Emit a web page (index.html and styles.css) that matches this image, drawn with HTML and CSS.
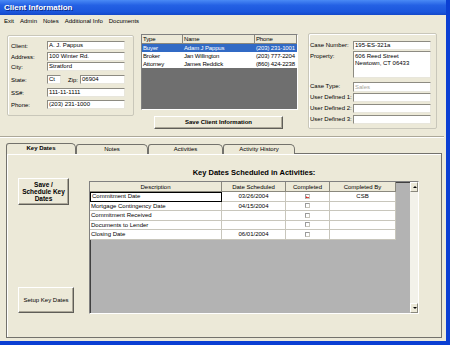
FILE: index.html
```html
<!DOCTYPE html>
<html lang="en">
<head>
    <meta charset="UTF-8">
    <title>Client Information</title>
    <link rel="stylesheet" href="styles.css">
</head>
<body>
    <div class="window">
        <div class="titlebar">Client Information</div>
        <div class="menubar">
            <span>Exit</span>
            <span>Admin</span>
            <span>Notes</span>
            <span>Additional Info</span>
            <span>Documents</span>
        </div>

        <div class="top">
            <div class="group client">
                <span class="label">Client:</span>
                <div class="field">A. J. Pappus</div>
                <span class="label">Address:</span>
                <div class="field">100 Winter Rd.</div>
                <span class="label">City:</span>
                <div class="field">Stratford</div>
                <span class="label">State:</span>
                <div class="state-row">
                    <div class="field state">Ct</div>
                    <span class="label zip-label">Zip:</span>
                    <div class="field zip">06904</div>
                </div>
                <span class="label">SS#:</span>
                <div class="field">111-11-1111</div>
                <span class="label">Phone:</span>
                <div class="field">(203) 231-1000</div>
            </div>

            <div class="contacts">
                <div class="list">
                    <div class="list-row list-head">
                        <span class="c-type">Type</span>
                        <span class="c-name">Name</span>
                        <span class="c-phone">Phone</span>
                    </div>
                    <div class="list-row selected">
                        <span class="c-type">Buyer</span>
                        <span class="c-name">Adam J Pappus</span>
                        <span class="c-phone">(203) 231-1001</span>
                    </div>
                    <div class="list-row">
                        <span class="c-type">Broker</span>
                        <span class="c-name">Jan Willington</span>
                        <span class="c-phone">(203) 777-2204</span>
                    </div>
                    <div class="list-row">
                        <span class="c-type">Attorney</span>
                        <span class="c-name">James Reddick</span>
                        <span class="c-phone">(860) 424-2238</span>
                    </div>
                </div>
                <button class="btn bold save-client">Save Client Information</button>
            </div>

            <div class="group case">
                <span class="label">Case Number:</span>
                <div class="field">195-ES-321a</div>
                <span class="label top-label">Property:</span>
                <div class="field area">606 Reed Street<br>Newtown, CT 06433</div>
                <span class="label">Case Type:</span>
                <div class="field disabled">Sales</div>
                <span class="label">User Defined 1:</span>
                <div class="field"></div>
                <span class="label">User Defined 2:</span>
                <div class="field"></div>
                <span class="label">User Defined 3:</span>
                <div class="field"></div>
            </div>
        </div>

        <div class="separator"></div>

        <div class="tabs">
            <div class="tab active">Key Dates</div>
            <div class="tab">Notes</div>
            <div class="tab">Activities</div>
            <div class="tab">Activity History</div>
        </div>

        <div class="panel">
            <div class="side">
                <button class="btn bold schedule">Save /<br>Schedule Key<br>Dates</button>
                <button class="btn setup">Setup Key Dates</button>
            </div>
            <div class="main">
                <h2>Key Dates Scheduled in Activities:</h2>
                <div class="grid">
                    <div class="grid-body">
                        <div class="g-row g-head">
                            <span class="g-desc">Description</span>
                            <span class="g-date">Date Scheduled</span>
                            <span class="g-done">Completed</span>
                            <span class="g-by">Completed By</span>
                        </div>
                        <div class="g-row">
                            <span class="g-desc current">Commitment Date</span>
                            <span class="g-date">03/26/2004</span>
                            <span class="g-done"><span class="check checked"></span></span>
                            <span class="g-by">CSB</span>
                        </div>
                        <div class="g-row">
                            <span class="g-desc">Mortgage Contingency Date</span>
                            <span class="g-date">04/15/2004</span>
                            <span class="g-done"><span class="check"></span></span>
                            <span class="g-by"></span>
                        </div>
                        <div class="g-row">
                            <span class="g-desc">Commitment Received</span>
                            <span class="g-date"></span>
                            <span class="g-done"><span class="check"></span></span>
                            <span class="g-by"></span>
                        </div>
                        <div class="g-row">
                            <span class="g-desc">Documents to Lender</span>
                            <span class="g-date"></span>
                            <span class="g-done"><span class="check"></span></span>
                            <span class="g-by"></span>
                        </div>
                        <div class="g-row">
                            <span class="g-desc">Closing Date</span>
                            <span class="g-date">06/01/2004</span>
                            <span class="g-done"><span class="check"></span></span>
                            <span class="g-by"></span>
                        </div>
                    </div>
                    <div class="scrollbar">
                        <span class="arrow up"></span>
                        <span class="arrow down"></span>
                    </div>
                </div>
            </div>
        </div>
    </div>
</body>
</html>
```

FILE: styles.css
```css
* {
    box-sizing: border-box;
}
body {
    margin: 0;
    font-family: "Liberation Sans", Arial, sans-serif;
    font-size: 6px;
    color: #000;
}
.window {
    width: 450px;
    height: 345px;
    background: #ece9d8;
    border-right: 4px solid #0b3fd3;
    border-bottom: 4px solid #0b3fd3;
    overflow: hidden;
}
.titlebar {
    height: 15px;
    padding-left: 4px;
    line-height: 15px;
    font-size: 8px;
    font-weight: bold;
    color: #fff;
    background: linear-gradient(#4a8af5, #2461e4 35%, #1b56dc 80%, #1448c8);
    text-shadow: 1px 1px 0 #0a2a8a;
}
.menubar {
    height: 12px;
    display: flex;
    gap: 6px;
    padding-left: 4px;
    line-height: 12px;
}

/* top section */
.top {
    height: 109px;
    display: flex;
    align-items: flex-start;
    padding-left: 7px;
}
.group {
    border: 1px solid #c9c7ba;
    border-radius: 2px;
    box-shadow: inset 1px 1px 0 #fff;
    display: grid;
    align-items: center;
}
.client {
    width: 127px;
    height: 81px;
    margin-top: 8px;
    padding: 5px 0 0 3px;
    grid-template-columns: 36px 78px;
    grid-template-rows: 11px 10px 13px 13px 12px 10px;
    align-items: start;
}
.client .label {
    line-height: 10px;
}
.field {
    height: 9px;
    background: #fff;
    border: 1px solid;
    border-color: #8d8b82 #e8e6dc #e8e6dc #8d8b82;
    padding-left: 1px;
    line-height: 7px;
    white-space: nowrap;
    overflow: hidden;
}
.state-row {
    display: flex;
}
.state {
    width: 14px;
}
.zip-label {
    margin-left: 7px;
    width: 12px;
    line-height: 10px;
}
.zip {
    width: 45px;
}

.contacts {
    width: 157px;
    margin: 7px 0 0 7px;
    display: flex;
    flex-direction: column;
}
.list {
    height: 76px;
    background: #6f6f6f;
    border: 1px solid;
    border-color: #808080 #fff #fff #808080;
}
.list-row {
    display: flex;
    height: 8px;
    line-height: 8px;
    background: #fff;
    letter-spacing: -0.15px;
}
.list-row span {
    padding-left: 1px;
    white-space: nowrap;
    overflow: hidden;
}
.list-head {
    height: 9px;
    line-height: 9px;
    background: #ece9d8;
}
.list-head span {
    border-right: 1px solid #8a887d;
    border-bottom: 1px solid #8a887d;
}
.list-row.selected {
    background: #316ac5;
    color: #fff;
}
.c-type {
    width: 41px;
}
.c-name {
    width: 72px;
}
.c-phone {
    flex: 1;
}

.btn {
    font-family: inherit;
    font-size: 6px;
    background: #ece9d8;
    border: 1px solid;
    border-color: #fff #5f5e58 #5f5e58 #fff;
    box-shadow: inset -1px -1px 0 #aca899;
    padding: 0;
    line-height: 7px;
    color: #000;
}
.bold {
    font-weight: bold;
}
.save-client {
    width: 129px;
    height: 13px;
    margin: 6px 0 0 13px;
}

.case {
    width: 129px;
    height: 96px;
    margin: 6px 0 0 10px;
    padding: 7px 0 0 1px;
    grid-template-columns: 43px 78px;
    grid-template-rows: 10px 31px 11px 11px 11px 9px;
    align-items: start;
}
.case .label {
    line-height: 9px;
}
.case .top-label {
    margin-top: 1px;
}
.area {
    height: 27px;
    white-space: normal;
    padding-top: 1px;
}
.disabled {
    height: 10px;
    color: #a8a69c;
    line-height: 8px;
}

.separator {
    height: 2px;
    margin-right: 2px;
    border-top: 1px solid #aca899;
    border-bottom: 1px solid #fff;
}

/* tabs */
.tabs {
    display: flex;
    height: 9px;
    margin-top: 6px;
    padding-left: 6px;
    align-items: flex-end;
}
.tab {
    height: 10px;
    margin-bottom: -1px;
    border: 1px solid #73726c;
    border-bottom: none;
    border-radius: 3px 5px 0 0;
    background: #ece9d8;
    text-align: center;
    line-height: 9px;
    position: relative;
}
.tab:nth-child(1) { width: 70px; }
.tab:nth-child(2) { width: 72px; }
.tab:nth-child(3) { width: 75px; }
.tab:nth-child(4) { width: 72px; }
.tab.active {
    height: 11px;
    font-weight: bold;
    z-index: 1;
}

.panel {
    display: flex;
    width: 436px;
    height: 185px;
    margin-left: 6px;
    border: 1px solid #73726c;
    box-shadow: inset 1px 1px 0 #fff;
}
.side {
    width: 82px;
    padding-left: 11px;
    display: flex;
    flex-direction: column;
    align-items: flex-start;
}
.schedule {
    width: 51px;
    height: 27px;
    margin-top: 24px;
    font-size: 6.5px;
}
.setup {
    width: 56px;
    height: 26px;
    margin-top: 82px;
}
.main {
    width: 330px;
}
.main h2 {
    margin: 14px 0 0;
    height: 9px;
    font-size: 7.5px;
    line-height: 9px;
    text-align: center;
}
.grid {
    display: flex;
    height: 133px;
    margin-top: 4px;
    background: #b3b3b3;
    border: 1px solid;
    border-color: #808080 #fff #fff #808080;
    box-shadow: inset 1px 1px 0 #404040;
}
.grid-body {
    flex: 1;
}
.g-row {
    display: flex;
    height: 9.5px;
    line-height: 9px;
}
.g-row span {
    background: #fff;
    border-right: 1px solid #c8c6bc;
    border-bottom: 1px solid #c8c6bc;
    white-space: nowrap;
    overflow: hidden;
}
.g-head {
    height: 10px;
    line-height: 10px;
}
.g-head span {
    background: #ece9d8;
    border-right-color: #8a887d;
    border-bottom-color: #8a887d;
    text-align: center;
}
.g-desc {
    width: 132px;
    padding-left: 1px;
}
.g-head .g-desc {
    padding-left: 0;
}
.g-desc.current {
    border: 1px solid #000;
    line-height: 7px;
}
.g-date {
    width: 64px;
    text-align: center;
}
.g-done {
    width: 44px;
    display: flex;
    justify-content: center;
    align-items: center;
}
.g-by {
    width: 66px;
    text-align: center;
}
.check {
    width: 5px;
    height: 5px;
    background: #c4c4c4;
    border: 1px solid #9a9a9a;
    position: relative;
}
.check.checked::after {
    content: "";
    position: absolute;
    left: 1px;
    top: -2px;
    width: 2px;
    height: 5px;
    border: solid #e01818;
    border-width: 0 2px 2px 0;
    transform: rotate(40deg);
}
.scrollbar {
    width: 10px;
    margin-left: 14px;
    background: #f3f2ea;
    display: flex;
    flex-direction: column;
    justify-content: space-between;
}
.arrow {
    height: 10px;
    background: #ece9d8;
    border: 1px solid;
    border-color: #fff #8a887d #8a887d #fff;
    position: relative;
}
.arrow::after {
    content: "";
    position: absolute;
    left: 2px;
    top: 3px;
    border-left: 2px solid transparent;
    border-right: 2px solid transparent;
}
.arrow.up::after {
    border-bottom: 2px solid #000;
}
.arrow.down::after {
    border-top: 2px solid #000;
}
```
